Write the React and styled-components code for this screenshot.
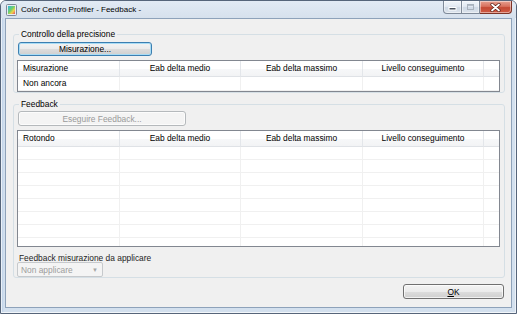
import React from 'react';
import styled, { createGlobalStyle } from 'styled-components';

const GlobalStyle = createGlobalStyle`
  html, body { margin: 0; padding: 0; background: #fff; }
  body { font-family: 'Liberation Sans', Arial, sans-serif; font-size: 8.4px; color: #000; }
`;

const COLS = '102px 121px 122px 121px 1fr';

const Window = styled.div`
  width: 517px;
  height: 314px;
  box-sizing: border-box;
  border: 1px solid #56657a;
  border-radius: 6px 6px 0 0;
  background: linear-gradient(to right, #b4cbe6 0, #d3e0ee 3px, #d3e0ee 514px, #a9c2e0 100%);
  box-shadow: inset 0 0 0 1px rgba(255, 255, 255, 0.7);
  display: flex;
  flex-direction: column;
  overflow: hidden;
`;

const TitleBar = styled.div`
  height: 17px;
  display: flex;
  align-items: flex-start;
  background: linear-gradient(to bottom, #e2eaf4 0, #d6e1ed 100%);
`;

const AppIcon = styled.svg`
  margin: 3px 0 0 5px;
  flex: none;
`;

const Title = styled.span`
  margin-left: 4px;
  font-size: 8px;
  line-height: 17px;
  color: #000;
`;

const Caption = styled.div`
  margin-left: auto;
  margin-right: 4px;
  display: flex;
`;

const CapBtn = styled.div`
  width: ${p => p.$w}px;
  height: 13px;
  box-sizing: border-box;
  border: 1px solid ${p => (p.$close ? '#7d3427' : '#7f8a99')};
  border-top: none;
  border-left-width: ${p => (p.$first ? 1 : 0)}px;
  border-radius: ${p => (p.$first ? '0 0 0 4px' : p.$close ? '0 0 4px 0' : '0')};
  background: ${p =>
    p.$close
      ? 'linear-gradient(to bottom, #e6a191 0, #d8715d 45%, #c44a34 55%, #d05b44 100%)'
      : 'linear-gradient(to bottom, #f1f5fa 0, #e2e9f2 45%, #cfd9e5 55%, #dbe3ec 100%)'};
  box-shadow: inset 0 0 0 1px rgba(255, 255, 255, 0.45);
  display: flex;
  align-items: center;
  justify-content: center;
`;

const Client = styled.div`
  flex: 1;
  margin: 0 4px 5px;
  border: 1px solid #8ea2ba;
  background: #f0f0f0;
  padding: 10px 6px 0 7px;
  display: flex;
  flex-direction: column;
`;

const Group = styled.fieldset`
  margin: ${p => p.$top || 0}px 0 0;
  padding: ${p => p.$pt}px 4px 0 3px;
  border: 1px solid #d5dfe5;
  border-radius: 3px;
  min-width: 0;
  display: flex;
  flex-direction: column;
  align-items: flex-start;
`;

const Legend = styled.legend`
  padding: 0 2px;
  margin-left: 2px;
  line-height: 10px;
  font-size: 8.4px;
`;

const Button = styled.div`
  width: ${p => p.$w}px;
  height: ${p => p.$h}px;
  box-sizing: border-box;
  margin-left: ${p => p.$ml || 0}px;
  border: 1px solid ${p => (p.$disabled ? '#b5b9bc' : p.$focus ? '#3c7fb1' : '#707070')};
  border-radius: 3px;
  background: ${p =>
    p.$disabled
      ? '#f4f4f4'
      : 'linear-gradient(to bottom, #f3f3f3 0, #ebebeb 50%, #dddddd 51%, #cfcfcf 100%)'};
  box-shadow: ${p => (p.$focus ? 'inset 0 0 0 1px #a8dcf5' : 'inset 0 0 0 1px rgba(255,255,255,0.7)')};
  color: ${p => (p.$disabled ? '#9a9a9a' : '#000')};
  display: flex;
  align-items: center;
  justify-content: center;
  font-size: 8.4px;
`;

const List = styled.div`
  width: 483px;
  height: ${p => p.$h}px;
  box-sizing: border-box;
  margin-top: 4px;
  border: 1px solid #828790;
  background: #fff;
  overflow: hidden;
`;

const Row = styled.div`
  display: grid;
  grid-template-columns: ${COLS};
  height: ${p => p.$h}px;
`;

const HeadCell = styled.div`
  border-right: 1px solid #e3e6ea;
  border-bottom: 1px solid #dfe2e6;
  background: linear-gradient(to bottom, #ffffff 0, #ffffff 50%, #f7f8f9 51%, #f2f3f5 100%);
  text-align: ${p => (p.$left ? 'left' : 'center')};
  padding-left: ${p => (p.$left ? 5 : 0)}px;
  line-height: 15px;
  white-space: nowrap;
  &:last-child { border-right: none; }
`;

const Cell = styled.div`
  border-right: 1px solid #f0f0f0;
  border-bottom: 1px solid #f0f0f0;
  padding-left: 5px;
  line-height: ${p => p.$h - 1}px;
  white-space: nowrap;
  &:last-child { border-right: none; }
`;

const FieldLabel = styled.div`
  margin-top: 7px;
  margin-left: 2px;
  line-height: 9px;
  color: #1e1e1e;
`;

const Combo = styled.div`
  width: 86px;
  height: 15px;
  box-sizing: border-box;
  margin-top: -1px;
  border: 1px solid #c6c9cc;
  border-radius: 2px;
  background: #f4f4f4;
  color: #9c9c9c;
  display: flex;
  align-items: center;
  padding: 0 4px 0 3px;
  justify-content: space-between;
`;

const ComboArrow = styled.span`
  font-size: 6px;
  color: #a6a6a6;
`;

const Footer = styled.div`
  display: flex;
  justify-content: flex-end;
  margin-top: 6px;
  padding-right: 1px;
`;

const headers = ['Eab delta medio', 'Eab delta massimo', 'Livello conseguimento'];

function ListView({ first, rows, height }) {
  const emptyRows = Array.from({ length: 8 }, (_, i) => rows[i] || null);
  return (
    <List $h={height}>
      <Row $h={16}>
        <HeadCell $left>{first}</HeadCell>
        {headers.map(h => <HeadCell key={h}>{h}</HeadCell>)}
        <HeadCell />
      </Row>
      {(rows.length ? rows : emptyRows).map((r, i) => (
        <Row key={i} $h={rows.length ? 14 : 13}>
          <Cell $h={rows.length ? 14 : 13}>{r}</Cell>
          <Cell $h={13} />
          <Cell $h={13} />
          <Cell $h={13} />
          <Cell $h={13} />
        </Row>
      ))}
    </List>
  );
}

function App() {
  return (
    <>
      <GlobalStyle />
      <Window>
        <TitleBar>
          <AppIcon width="11" height="12" viewBox="0 0 11 12">
            <defs>
              <linearGradient id="ic" x1="0" y1="0" x2="1" y2="1">
                <stop offset="0" stopColor="#2fb6e8" />
                <stop offset="0.45" stopColor="#6fd06a" />
                <stop offset="0.7" stopColor="#f2d24a" />
                <stop offset="1" stopColor="#e2486a" />
              </linearGradient>
            </defs>
            <rect x="0.5" y="0.5" width="10" height="11" rx="1" fill="#e8edf2" stroke="#7d8a98" />
            <rect x="2" y="2" width="7" height="8" fill="url(#ic)" />
          </AppIcon>
          <Title>Color Centro Profiler - Feedback -</Title>
          <Caption>
            <CapBtn $w={19} $first>
              <svg width="9" height="8" viewBox="0 0 9 8">
                <rect x="1" y="4.5" width="7" height="2.5" fill="#4a5360" stroke="#fff" strokeWidth="1" />
              </svg>
            </CapBtn>
            <CapBtn $w={18}>
              <svg width="9" height="8" viewBox="0 0 9 8">
                <rect x="1.5" y="1.5" width="6" height="5" fill="none" stroke="#a9b2bd" strokeWidth="1" />
                <rect x="1.5" y="1.5" width="6" height="1.3" fill="#a9b2bd" />
              </svg>
            </CapBtn>
            <CapBtn $w={32} $close>
              <svg width="11" height="9" viewBox="0 0 11 9">
                <path d="M2 1.5 L9 7.5 M9 1.5 L2 7.5" stroke="#5a2018" strokeWidth="3.2" strokeLinecap="round" />
                <path d="M2 1.5 L9 7.5 M9 1.5 L2 7.5" stroke="#fff" strokeWidth="1.8" strokeLinecap="round" />
              </svg>
            </CapBtn>
          </Caption>
        </TitleBar>
        <Client>
          <Group $pt={3}>
            <Legend>Controllo della precisione</Legend>
            <Button $w={134} $h={14} $ml={1} $focus>Misurazione...</Button>
            <ListView first="Misurazione" rows={['Non ancora']} height={32} />
          </Group>
          <Group $top={6} $pt={2}>
            <Legend>Feedback</Legend>
            <Button $w={168} $h={15} $ml={1} $disabled>Eseguire Feedback...</Button>
            <ListView first="Rotondo" rows={[]} height={117} />
            <FieldLabel>Feedback misurazione da applicare</FieldLabel>
            <Combo>
              <span>Non applicare</span>
              <ComboArrow>▼</ComboArrow>
            </Combo>
          </Group>
          <Footer>
            <Button $w={101} $h={15}><span><u>O</u>K</span></Button>
          </Footer>
        </Client>
      </Window>
    </>
  );
}

export default App;
